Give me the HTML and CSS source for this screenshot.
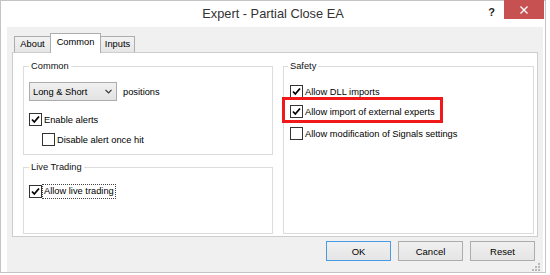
FILE: index.html
```html
<!DOCTYPE html>
<html lang="en">
<head>
  <meta charset="UTF-8" />
  <title>Expert - Partial Close EA</title>
  <link rel="stylesheet" href="styles.css">
</head>
<body>
  <div class="window">
    <div class="titlebar">
      <span class="title">Expert - Partial Close EA</span>
      <div class="controls">
        <span class="help">?</span>
        <span class="close">
          <svg width="8" height="8" viewBox="0 0 8 8"><path d="M0.5 0.5 L7.5 7.5 M7.5 0.5 L0.5 7.5" stroke="#fff" stroke-width="1.4"/></svg>
        </span>
      </div>
    </div>

    <div class="client">
      <div class="tabs">
        <div class="tab tab-about">About</div>
        <div class="tab tab-common active">Common</div>
        <div class="tab tab-inputs">Inputs</div>
      </div>

      <div class="panel">
        <div class="left-col">
          <fieldset class="group group-common">
            <legend>Common</legend>
            <div class="combo-row">
              <div class="combo">
                <span>Long &amp; Short</span>
                <svg width="7" height="5" viewBox="0 0 7 5"><path d="M0.5 0.8 L3.5 3.8 L6.5 0.8" fill="none" stroke="#333" stroke-width="1.2"/></svg>
              </div>
              <span>positions</span>
            </div>
            <div class="check-row row-alerts">
              <span class="box checked"><svg width="11" height="11" viewBox="0 0 11 11"><path d="M2 5.5 L4.3 8 L9 2.5" fill="none" stroke="#000" stroke-width="1.8"/></svg></span>
              <span>Enable alerts</span>
            </div>
            <div class="check-row row-once">
              <span class="box"></span>
              <span>Disable alert once hit</span>
            </div>
          </fieldset>

          <fieldset class="group group-live">
            <legend>Live Trading</legend>
            <div class="check-row row-live">
              <span class="box checked"><svg width="11" height="11" viewBox="0 0 11 11"><path d="M2 5.5 L4.3 8 L9 2.5" fill="none" stroke="#000" stroke-width="1.8"/></svg></span>
              <span class="focus">Allow live trading</span>
            </div>
          </fieldset>
        </div>

        <fieldset class="group group-safety">
          <legend>Safety</legend>
          <div class="check-row row-dll">
            <span class="box checked"><svg width="11" height="11" viewBox="0 0 11 11"><path d="M2 5.5 L4.3 8 L9 2.5" fill="none" stroke="#000" stroke-width="1.8"/></svg></span>
            <span>Allow DLL imports</span>
          </div>
          <div class="check-row row-import">
            <span class="box checked"><svg width="11" height="11" viewBox="0 0 11 11"><path d="M2 5.5 L4.3 8 L9 2.5" fill="none" stroke="#000" stroke-width="1.8"/></svg></span>
            <span>Allow import of external experts</span>
            <span class="mark"></span>
          </div>
          <div class="check-row row-signals">
            <span class="box"></span>
            <span>Allow modification of Signals settings</span>
          </div>
        </fieldset>
      </div>

      <div class="buttons">
        <button class="btn default">OK</button>
        <button class="btn">Cancel</button>
        <button class="btn">Reset</button>
      </div>

      <svg class="grip" width="8" height="8" viewBox="0 0 8 8" fill="#b8b8b8">
        <rect x="6" y="0" width="2" height="2"/>
        <rect x="3" y="3" width="2" height="2"/>
        <rect x="6" y="3" width="2" height="2"/>
        <rect x="0" y="6" width="2" height="2"/>
        <rect x="3" y="6" width="2" height="2"/>
        <rect x="6" y="6" width="2" height="2"/>
      </svg>
    </div>
  </div>
</body>
</html>
```

FILE: styles.css
```css
body {
  margin: 0;
  background: #ffffff;
  font-family: "Liberation Sans", Arial, sans-serif;
  font-size: 9.3px;
  color: #000;
}

.window {
  width: 546px;
  height: 273px;
  box-sizing: border-box;
  border: 1px solid #c4c4c4;
  background: #ffffff;
  display: flex;
  flex-direction: column;
}

/* title bar */
.titlebar {
  height: 26px;
  flex: none;
  display: grid;
  grid-template-columns: 1fr auto 1fr;
  align-items: start;
}

.title {
  grid-column: 2;
  font-size: 12.8px;
  line-height: 26px;
  color: #333;
}

.controls {
  grid-column: 3;
  justify-self: end;
  display: flex;
  align-items: flex-start;
  margin-right: 1px;
}

.help {
  font-weight: bold;
  font-size: 11px;
  line-height: 12px;
  margin-top: 5px;
  margin-right: 9px;
  color: #222;
}

.close {
  width: 40px;
  height: 19px;
  margin-top: -1px;
  background: #c75050;
  display: flex;
  align-items: center;
  justify-content: center;
}

/* client area */
.client {
  flex: 1;
  margin: 0 2px 0 6px;
  padding: 6px 5px 11px;
  background: #f0f0f0;
  display: flex;
  flex-direction: column;
  position: relative;
}

.tabs {
  height: 19px;
  flex: none;
  display: flex;
  align-items: flex-end;
  padding-left: 2px;
  position: relative;
  z-index: 1;
}

.tab {
  height: 16px;
  box-sizing: border-box;
  border: 1px solid #acacac;
  border-bottom: none;
  background: linear-gradient(#f2f2f2, #e6e6e6);
  line-height: 15px;
  text-align: center;
  margin-right: -1px;
}

.tab-about { width: 37px; }
.tab-common { width: 51px; }
.tab-inputs { width: 35px; }

.tab.active {
  height: 20px;
  margin-bottom: -1px;
  background: #ffffff;
  line-height: 17px;
  position: relative;
  z-index: 2;
}

.panel {
  height: 185px;
  flex: none;
  box-sizing: border-box;
  border: 1px solid #cdcdcd;
  background: #ffffff;
  padding: 7px 3px 2px 10px;
  display: grid;
  grid-template-columns: 250px 251px;
  column-gap: 10px;
}

.left-col {
  display: flex;
  flex-direction: column;
  gap: 6px;
}

/* group boxes */
.group {
  margin: 0;
  min-width: 0;
  border: 1px solid #dcdcdc;
  padding: 0 5px 8px;
}

.group legend {
  padding: 0 2px;
  line-height: 12px;
  color: #111;
}

.group-live {
  flex: 1;
}

.group-safety {
  padding-left: 6px;
}

.group-safety legend {
  margin-left: -2px;
}

.combo-row {
  margin-top: 10px;
  display: flex;
  align-items: center;
  gap: 6px;
}

.combo {
  width: 88px;
  height: 19px;
  box-sizing: border-box;
  border: 1px solid #acacac;
  background: linear-gradient(#f0f0f0, #e3e3e3);
  display: flex;
  align-items: center;
  justify-content: space-between;
  padding: 0 4px 0 3px;
}

.check-row {
  height: 13px;
  display: flex;
  align-items: center;
  gap: 2px;
  position: relative;
}

.row-alerts { margin-top: 12px; }
.row-once { margin-top: 7px; padding-left: 13px; }
.row-live { margin-top: 12px; gap: 0; }
.row-dll { margin-top: 13px; }
.row-import { margin-top: 7px; }
.row-signals { margin-top: 9px; }

.box {
  width: 13px;
  height: 13px;
  flex: none;
  box-sizing: border-box;
  border: 1px solid #333;
  background: #ffffff;
  display: flex;
  align-items: center;
  justify-content: center;
}

.focus {
  border: 1px dotted #444;
  padding: 0 1px;
  line-height: 13px;
}

/* red highlight drawn over the screenshot */
.mark {
  position: absolute;
  left: -8px;
  top: -8px;
  width: 161px;
  height: 26px;
  box-sizing: border-box;
  border: 3px solid #f01818;
}

/* dialog buttons */
.buttons {
  margin-top: 4px;
  padding-right: 3px;
  display: flex;
  justify-content: flex-end;
  gap: 7px;
}

.btn {
  width: 65px;
  height: 20px;
  box-sizing: border-box;
  border: 1px solid #acacac;
  background: linear-gradient(#f0f0f0, #e5e5e5);
  font-family: "Liberation Sans", Arial, sans-serif;
  font-size: 9.5px;
  color: #000;
  padding: 0;
}

.btn.default {
  border-color: #4a9be6;
}

.grip {
  position: absolute;
  right: 3px;
  bottom: 1px;
}
```
